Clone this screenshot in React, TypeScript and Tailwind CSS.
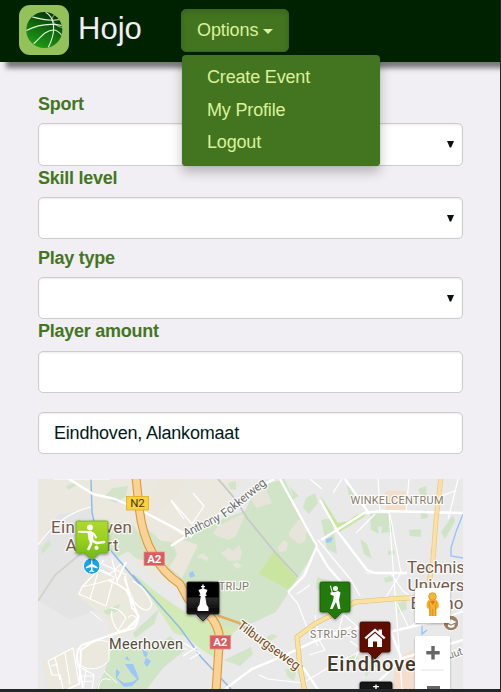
import React from "react";

const FONT = "font-['Liberation_Sans',Arial,sans-serif]";

function Logo() {
  return (
    <svg viewBox="0 0 50 50" className="block h-[50px] w-[50px]">
      <defs>
        <linearGradient id="ball" x1="0.25" y1="1" x2="0.7" y2="0">
          <stop offset="0" stopColor="#1fa016" />
          <stop offset="0.5" stopColor="#126e0e" />
          <stop offset="1" stopColor="#032f03" />
        </linearGradient>
        <clipPath id="ballClip">
          <circle cx="25.3" cy="25" r="18" />
        </clipPath>
      </defs>
      <rect width="50" height="50" rx="11" fill="#94c159" />
      <circle cx="25.3" cy="25" r="18" fill="url(#ball)" />
      <g clipPath="url(#ballClip)" fill="none" stroke="#e4f3df" strokeWidth="1.1" strokeLinecap="round">
        <path d="M7.500 25.500C16 21 28 17.500 43 20.500" />
        <path d="M13.500 12C20 13.500 29 17 41 14.500" />
        <path d="M27 7.500C35 12 38 25 29.500 42" />
        <path d="M36 9.500C31 13 33 19 42.500 22.500" opacity=".55" />
        <path d="M15 38.500C22 32 27 25 34.500 25C38 25 41 28 43 30.500" />
      </g>
    </svg>
  );
}

function Label({ children, className }: { children: React.ReactNode; className: string }) {
  return (
    <label className={`block text-[18px] leading-[26px] font-bold tracking-[-0.25px] text-[#43761f] ${className}`}>{children}</label>
  );
}

function Field({ select, value, className }: { select?: boolean; value?: string; className: string }) {
  return (
    <div
      className={`flex items-center justify-between rounded-[5px] border border-[#ccc] bg-white pr-2 pl-[15px] shadow-[inset_0_1px_2px_rgba(0,0,0,0.08)] ${className}`}
    >
      <span className="text-[18px] tracking-[-0.2px] text-[#001a1a]">{value}</span>
      {select && (
        <svg viewBox="0 0 7 7" className="h-[7px] w-[7px]">
          <path d="M0 0H7L4.200 6.500H2.800Z" fill="#0b1111" />
        </svg>
      )}
    </div>
  );
}

function Shield({ x, y, text, yellow }: { x: number; y: number; text: string; yellow?: boolean }) {
  return (
    <g>
      <rect x={x} y={y} width={yellow ? 22 : 20.500} height="13.500" fill={yellow ? "#fbd13c" : "#dc5b5f"} stroke={yellow ? "#d4a915" : "#e98c8e"} strokeWidth=".7" />
      <text x={x + (yellow ? 11 : 10.300)} y={y + 10.800} textAnchor="middle" fontSize="11.500" fontWeight={yellow ? "400" : "700"} fill={yellow ? "#443716" : "#fff"}>{text}</text>
    </g>
  );
}

function Pin({ x, y, w = 30, fill, stroke, children }: { x: number; y: number; w?: number; fill: string; stroke: string; children?: React.ReactNode }) {
  const h = w / 2;
  return (
    <g transform={`translate(${x} ${y})`}>
      <path
        d={`M1.500 0H${w - 1.500}Q${w} 0 ${w} 1.500V${w - 1}Q${w} ${w} ${w - 1.500} ${w}H${h + 7}L${h} ${w + 7}L${h - 7} ${w}H1.500Q0 ${w} 0 ${w - 1}V1.500Q0 0 1.500 0Z`}
        fill={fill}
        stroke={stroke}
        strokeWidth=".8"
        filter="url(#pinShadow)"
      />
      {children}
    </g>
  );
}

function CityMap() {
  return (
    <svg viewBox="38 479 425 210" className="block h-[210px] w-[425px]" fontFamily="Roboto, sans-serif">
      <defs>
        <filter id="pinShadow" x="-30%" y="-30%" width="160%" height="160%">
          <feDropShadow dx="0" dy="1" stdDeviation="1.500" floodOpacity=".5" />
        </filter>
        <filter id="boxShadow" x="-30%" y="-30%" width="160%" height="160%">
          <feDropShadow dx="0" dy="1" stdDeviation="1.200" floodOpacity=".3" />
        </filter>
        <linearGradient id="lime" x1="0" y1="0" x2="0" y2="1">
          <stop offset="0" stopColor="#add831" />
          <stop offset=".45" stopColor="#9bd21e" />
          <stop offset="1" stopColor="#6fb51d" />
        </linearGradient>
        <linearGradient id="black" x1="0" y1="0" x2="0" y2="1">
          <stop offset="0" stopColor="#000" />
          <stop offset=".38" stopColor="#050505" />
          <stop offset=".42" stopColor="#2b2b2b" />
          <stop offset=".75" stopColor="#080808" />
          <stop offset="1" stopColor="#666" />
        </linearGradient>
      </defs>

      {/* Ground and built-up areas */}
      <rect x="38" y="479" width="425" height="210" fill="#e9e9e9" />
      <path d="M38 479H245L219 512L171 545L181 590L155 580L132 560L113 550L91 510L73 514L38 544Z" fill="#ebe8df" />
      <path d="M38 544L58 515L91 508L101 545L92 560L125 580L110 605L70 620L38 600Z" fill="#e4e4e5" />
      <path d="M98 575L127 567L149 588L154 611L139 614L133 632L113 641L107 620L76 594L87 578Z" fill="#ebe8dd" />
      <path d="M80 645Q95 638 110 642L109 661Q94 673 82 666ZM42 662L74 648L80 689H48Z" fill="#ebe8dd" />
      <path d="M396 660L412 650L426 669L428 689H392Z" fill="#f3dfcc" />

      {/* Parks */}
      <path d="M258 485L283 480L317 548L292 587L276 612L231 633L211 617L188 591L172 579L136 551L147 539L171 542L198 528L245 511Z" fill="#d1e4c8" />
      <path d="M103 497L113 488L128 486L126 496L116 503ZM101 536L118 522L132 524L140 535L149 530L164 544L168 560L178 572L180 588L165 578L150 561L137 559L128 551L116 558Z" fill="#d3e4ca" />
      <path d="M66 486L76 482L77 485L68 490ZM176 480L187 480L171 496L162 507L164 496ZM228 483L236 481L236 490L230 489ZM41 548L49 540L51 545L42 554Z" fill="#d1e5c8" />
      <path d="M136 575L157 593L188 614L210 623L236 628L218 660L202 650L187 637L174 633Z" fill="#d3e9b6" />
      <path d="M103 611L120 604L118 611L107 615ZM133 633L159 609L154 624L135 638ZM112 646L151 650L170 636L185 650L163 668L147 689H96L105 671Z" fill="#d0e4c6" />
      <path d="M274 551L297 579L288 589L259 574Z" fill="#c9e59f" />
      <path d="M276 482L284 478L294 499L287 505ZM290 487L299 496L294 499ZM306 498L315 493L318 503L309 514L303 508ZM321 520L332 518L334 532L337 554L327 549Z" fill="#cfe5c5" />
      <path d="M320 495L338 523L348 521L356 515L367 512L364 517L338 533L331 523L322 500Z" fill="#c8e69f" />
      <path d="M370 513L391 514L392 525L378 527L379 534L371 530ZM347 486L351 485L355 498L350 500ZM382 526L392 522L392 532L381 533ZM409 530L421 529L421 537L410 536ZM360 539L367 544L372 559L364 554ZM441 532L453 515L455 521L445 539ZM420 511L427 510L428 518L421 519ZM430 553L433 543L436 555ZM388 551L394 550L395 554L388 555ZM418 489L426 486L427 497L420 495Z" fill="#cfe4c7" />
      <path d="M224 660L251 647L253 654L240 666ZM258 643L272 634L278 636L262 647ZM285 669L297 668L294 681L287 676ZM317 577L331 581L325 595L316 588ZM364 667L375 655L380 659L366 677ZM384 578L390 576L395 580L385 583ZM396 604L406 600L407 609L399 613ZM348 656L355 653L359 658L347 665Z" fill="#d3e5c7" />

      {/* Open fields inside the woods */}
      <path d="M213 534L218 526L240 515L245 514L240 526L236 536L228 540ZM250 497L260 488L266 490L272 503L256 508ZM289 532L299 519L307 530L305 541L299 544L289 536ZM221 553L229 548L233 551L239 545L242 552L240 560L229 561ZM197 557L202 553L209 558L207 561ZM278 547L284 540L288 543L286 551L279 552ZM232 564L237 562L242 566L237 569Z" fill="#e7e5db" />
      <path d="M160 479L188 479L171 500L156 516L142 508ZM170 535L198 545L182 578L169 567L177 555Z" fill="#ebe7dc" />
      <path d="M385 491L406 491L407 511L386 512Z" fill="#f2dec9" />

      {/* Water */}
      <g fill="none" stroke="#8cb9ed" strokeWidth="1.400">
        <path d="M91 479L92 512Q94 526 104 542L112 552L140 585M133 575L180 628L201 657L231 689" />
        <path d="M463 514Q456 530 451 548V556L463 558" stroke="#96c4fb" />
        <path d="M422 620V634L427 630M423 640L419 650" stroke="#96c4fb" />
      </g>
      <path d="M144 663L148 653L142 649L144 656L151 661L147 667ZM127 656L130 661L125 659ZM116 669L120 672L117 678L124 683L132 682L137 679L131 673L125 664L133 664L137 673L139 679L132 686L124 687L116 678ZM189 573L193 571L195 576L190 578ZM326 539L333 537L331 542L326 543Z" fill="#9bc8f8" />

      {/* Minor streets */}
      <g fill="none" stroke="#fff" strokeWidth="1.200" strokeLinejoin="round">
        <path d="M38 545Q60 514 91 507M54 479L110 479M171 500L192 524L204 506L193 493M184 519L171 501M104 560L97 568L110 574L121 564M112 559L118 585M98 562L127 575M82 587L98 570L114 577L106 606L79 594ZM98 572L90 599M114 579L82 587M110 608Q119 607 126 618L118 631Q110 620 112 611M124 579L134 602Q148 617 152 604Q146 588 133 581M128 618Q132 612 138 620L131 627M48 661L73 648L79 684M48 661L52 675H60L63 689M55 657L60 680M65 653L70 684M51 666L58 664M80 667L94 675L92 689M86 669L84 685M81 676H94M80 682L92 681" />
        <path d="M190 659L200 653L184 643M197 647L183 656M310 479L322 489M342 479L333 493M378 479L380 512L389 512L402 689M409 479L406 512M433 499L455 491M458 479L452 504L448 519M390 514L401 573L386 597M356 533L375 514M366 573H406M351 612L340 600M338 635L343 614L360 629M390 572L403 591L414 599M397 604L409 628L432 609M350 641L360 648L353 663M309 655L325 650L319 640L315 615M318 540L351 580L360 596" />
        <path d="M288 592L298 604L306 625L318 646M259 675L268 679L303 683L331 666L361 651M310 585L297 594" />
      </g>
      <g fill="none" stroke="#fff" strokeWidth="2.400" strokeLinejoin="round">
        <path d="M69 479L93 494L115 499L140 510L192 537M171 546L255 490L274 479M280 479L310 534L317 546L304 576L288 592M316 547L328 567L348 590M171 526L187 536" />
        <path d="M108 580L119 585L126 590L133 603L139 617L127 629L108 636L82 645Q73 654 80 670L79 684L68 689M125 576L129 594L132 608Q143 617 134 628L105 637L91 643L81 650L80 672L83 688M126 562L117 581" strokeWidth="1.900" />
        <path d="M225 689L252 669L281 657L313 642L351 627M321 540L364 513L382 511L463 513M345 479L368 512M320 500L338 532L367 570L375 573H407M298 660L321 694M379 681L403 658L463 640M390 630L403 662L413 671M355 628L385 633L440 620L463 611" />
      </g>
      <g fill="none" stroke="#fff" strokeWidth="1">
        <path d="M76 650Q92 636 109 642L109 661Q95 674 81 666M90 611L102 621M98 689Q100 675 111 680M104 671L117 683M170 646Q180 650 187 649" />
      </g>

      {/* Railway */}
      <path d="M218 479L236 500L247 518L274 551L298 577" fill="none" stroke="#c7c8c8" strokeWidth="1.800" />
      <path d="M38 601L55 575L101 537" fill="none" stroke="#d2d2cc" strokeWidth="1.800" />

      {/* Arterials */}
      <g fill="none" strokeLinejoin="round" strokeLinecap="round">
        <path d="M136 477L139 507Q142 535 153 554Q163 573 180 584L188 599L207 613Q222 627 219 646L216 692" stroke="#db9b38" strokeWidth="9" />
        <path d="M136 477L139 507Q142 535 153 554Q163 573 180 584L188 599L207 613Q222 627 219 646L216 692" stroke="#fad296" strokeWidth="6.800" />
        <path d="M219 616L239 623L272 650L302 666" stroke="#e4ad59" strokeWidth="2.500" />
        <path d="M305 692L300 667L297 637L316 623L338 612L355 602L391 599L425 597" stroke="#e2bd70" strokeWidth="5" />
        <path d="M305 692L300 667L297 637L316 623L338 612L355 602L391 599L425 597" stroke="#fae2a0" strokeWidth="3.800" />
        <path d="M441 477L436 520L433 560L427 594" stroke="#edca84" strokeWidth="5" />
        <path d="M441 477L436 520L433 560L427 594" stroke="#fae0a4" strokeWidth="3.500" />
      </g>

      <Shield x={126.500} y={496.500} text="N2" yellow />
      <Shield x={144} y={552} text="A2" />
      <Shield x={210} y={635.500} text="A2" />

      {/* Place names */}
      <g paintOrder="stroke" stroke="#fff" strokeOpacity=".85" strokeWidth="2.500" strokeLinejoin="round">
        <text x="51" y="533" fontSize="17" fill="#74594b" textLength="81">Eindhoven</text>
        <text x="65.500" y="550.500" fontSize="17" fill="#74594b" textLength="53">Airport</text>
        <text x="109" y="649" fontSize="14.500" fill="#544a38" textLength="74">Meerhoven</text>
        <text x="212" y="590" fontSize="11" fill="#80786b" textLength="37">STRIJP</text>
        <text x="350.500" y="504" fontSize="11" fill="#877c6b" textLength="93">WINKELCENTRUM</text>
        <text x="310" y="638" fontSize="10.500" fill="#80786b" textLength="47">STRIJP-S</text>
        <text x="407" y="573" fontSize="17" fill="#74594b" textLength="58">Technis</text>
        <text x="407.500" y="591" fontSize="17" fill="#74594b" textLength="57">Univers</text>
        <text x="410.500" y="609" fontSize="17" fill="#74594b" textLength="53">Eindho</text>
        <text transform="translate(185.500 537.500) rotate(-26)" fontSize="12" fill="#6c6b69" textLength="40">Anthony</text>
        <text transform="translate(225 518) rotate(-39)" fontSize="12" fill="#6c6b69" textLength="54">Fokkerweg</text>
        <text transform="translate(236.500 627) rotate(36)" fontSize="13" fill="#74491a" textLength="74">Tilburgseweg</text>
        <text transform="translate(449 659) rotate(-18)" fontSize="11" fill="#777" textLength="15">uut</text>
        <text x="327" y="670.500" fontSize="20" fontWeight="500" fill="#44392b" textLength="101">Eindhoven</text>
      </g>

      {/* Airport badge */}
      <circle cx="91.700" cy="566" r="8.300" fill="#16a5ea" stroke="#fff" strokeWidth="1" />
      <path d="M91 560.500Q91.700 559.500 92.500 560.500V564L97.500 567V568.500L92.500 567V570L94.200 571.500V572.300L91.700 571.500L89.200 572.300V571.500L91 570V567L86 568.500V567L91 564Z" fill="#fff" />

      <Pin x={76} y={521} w={32} fill="url(#lime)" stroke="#6dac1d">
        <circle cx="14" cy="6.500" r="2.900" fill="#fff" />
        <path d="M3 10.800L15 11L18 13L20 16.500" fill="none" stroke="#fff" strokeWidth="2" strokeLinejoin="round" strokeLinecap="round" />
        <path d="M14 12.500L14.500 19L21 22L28 21M14.500 19L15 23L12.500 28" fill="none" stroke="#fff" strokeWidth="2.600" strokeLinejoin="round" strokeLinecap="round" />
        <path d="M11.500 11H17L17.500 19H12.500Z" fill="#fff" />
        <circle cx="20.500" cy="26.700" r="2.100" fill="#fff" />
      </Pin>

      <Pin x={187} y={582} w={32} fill="url(#black)" stroke="#111">
        <path d="M15.300 2.500H16.700V4H18V5.300H16.700V6.500L20.500 8L18.500 12.500H19.500V14H18.200L19.500 22.500L21.500 25.500V29H10.500V25.500L12.500 22.500L13.800 14H12.500V12.500H13.500L11.500 8L15.300 6.500V5.300H14V4H15.300Z" fill="#fff" />
      </Pin>

      <Pin x={320} y={582} fill="#237a08" stroke="#145904">
        <circle cx="15.500" cy="6.500" r="2.500" fill="#fff" />
        <path d="M10.500 4L12.500 11.500" stroke="#fff" strokeWidth="1" strokeLinecap="round" />
        <path d="M18 9L20.500 10.500L19 18L20.500 27H18L16 20L12.500 27H10L13.200 18L13.800 14L10.500 12.500V10.500L15 10Z" fill="#fff" />
      </Pin>

      <Pin x={360} y={622} fill="#600b03" stroke="#3d0703">
        <path d="M4.500 15.500L15 6.500L18.500 9.500V7.500H22V12.500L25.500 15.500L24 17.200L15 9.500L6 17.200ZM8 17L15 11L22 17V25H17V19.500H13V25H8Z" fill="#fff" />
      </Pin>
      <Pin x={360} y={682} w={32} fill="#161616" stroke="#090909">
        <path d="M15.300 2.500H16.700V4H19V5.300H16.700V7H15.300V5.300H13V4H15.300Z" fill="#fff" />
      </Pin>

      {/* University badge */}
      <circle cx="451" cy="623" r="7.800" fill="#9c8069" stroke="#fff" strokeWidth="1" />
      <path d="M446 622L451 619.200L456.500 622L451 624.500ZM448 624.200L451 625.700L454.500 624V626.500Q451 629 448 626.500Z" fill="#fff" />

      {/* Map controls */}
      <rect x="415" y="588" width="35" height="35" rx="1.500" fill="#fff" filter="url(#boxShadow)" />
      <path d="M428.500 600Q432.500 598 436.500 600Q440 603 438.300 608L436.500 609V616H429V609L427 608Q425.500 603 428.500 600Z" fill="#f4b32b" />
      <path d="M429 602L430 608V616M436.500 602L435.500 608V616M432.700 609V616" fill="none" stroke="#d9871c" strokeWidth=".8" />
      <path d="M430 601H435.500L432.700 605Z" fill="#df7628" />
      <circle cx="432.500" cy="596.500" r="3.800" fill="#f7b736" stroke="#d78c21" strokeWidth=".8" />
      <rect x="415" y="636" width="35" height="70" rx="1.500" fill="#fff" filter="url(#boxShadow)" />
      <path d="M431.300 646H434.700V651H439.700V654.400H434.700V659.500H431.300V654.400H426.300V651H431.300ZM427 686H440V689H427Z" fill="#666" />
      <path d="M421 670H444" stroke="#e3e3e3" />
    </svg>
  );
}

export default function App() {
  return (
    <div className={`flex h-[692px] w-[501px] flex-col overflow-hidden bg-[#252628] ${FONT}`}>
      <div className="flex h-[689px] w-[500px] flex-col overflow-hidden bg-[#f1eff3]">
        <header className="relative z-10 flex h-[62px] shrink-0 items-start bg-[#002200] pl-[19px] shadow-[6px_6px_5px_rgba(0,0,0,0.5)]">
          <div className="mt-[5px]">
            <Logo />
          </div>
          <span className="mt-[10px] ml-[9px] w-[103px] text-[31px] leading-[38px] text-[#f1eff3]">Hojo</span>
          <div className="relative mt-[9px]">
            <button className="flex h-[43px] w-[108px] items-center rounded-[5px] border border-[#3b681c] bg-[#437521] pl-[15px] text-[18px] tracking-[-0.1px] text-[#dcf19b] shadow-[inset_0_3px_5px_rgba(0,0,0,0.125)]">
              Options
              <span className="mt-[2px] ml-[5px] border-x-[5px] border-t-[5px] border-x-transparent border-t-[#dcf19b]" />
            </button>
            <ul className="absolute top-[46px] left-px h-[111px] w-[198px] rounded-[4px] bg-[#437521] pt-[6px] pl-[25px] text-[18px] leading-[32.500px] tracking-[-0.170px] text-[#dcf19b] shadow-[0_6px_12px_rgba(0,0,0,0.25),0_0_1px_rgba(0,0,0,0.4)]">
              <li>Create Event</li>
              <li>My Profile</li>
              <li>Logout</li>
            </ul>
          </div>
        </header>
        <main className="flex flex-col px-[38px] pt-[29px]">
          <Label className="mb-[6px]">Sport</Label>
          <Field select className="h-[43px] w-[425px]" />
          <Label className="mt-[-1px] mb-[6px]">Skill level</Label>
          <Field select className="h-[42px] w-[425px]" />
          <Label className="mt-[6px] mb-[6px]">Play type</Label>
          <Field select className="h-[42px] w-[425px]" />
          <Label className="mt-[-1px] mb-[7px]">Player amount</Label>
          <Field className="h-[42px] w-[425px]" />
          <Field value="Eindhoven, Alankomaat" className="mt-[19px] mb-[25px] h-[42px] w-[425px]" />
          <CityMap />
        </main>
      </div>
    </div>
  );
}
